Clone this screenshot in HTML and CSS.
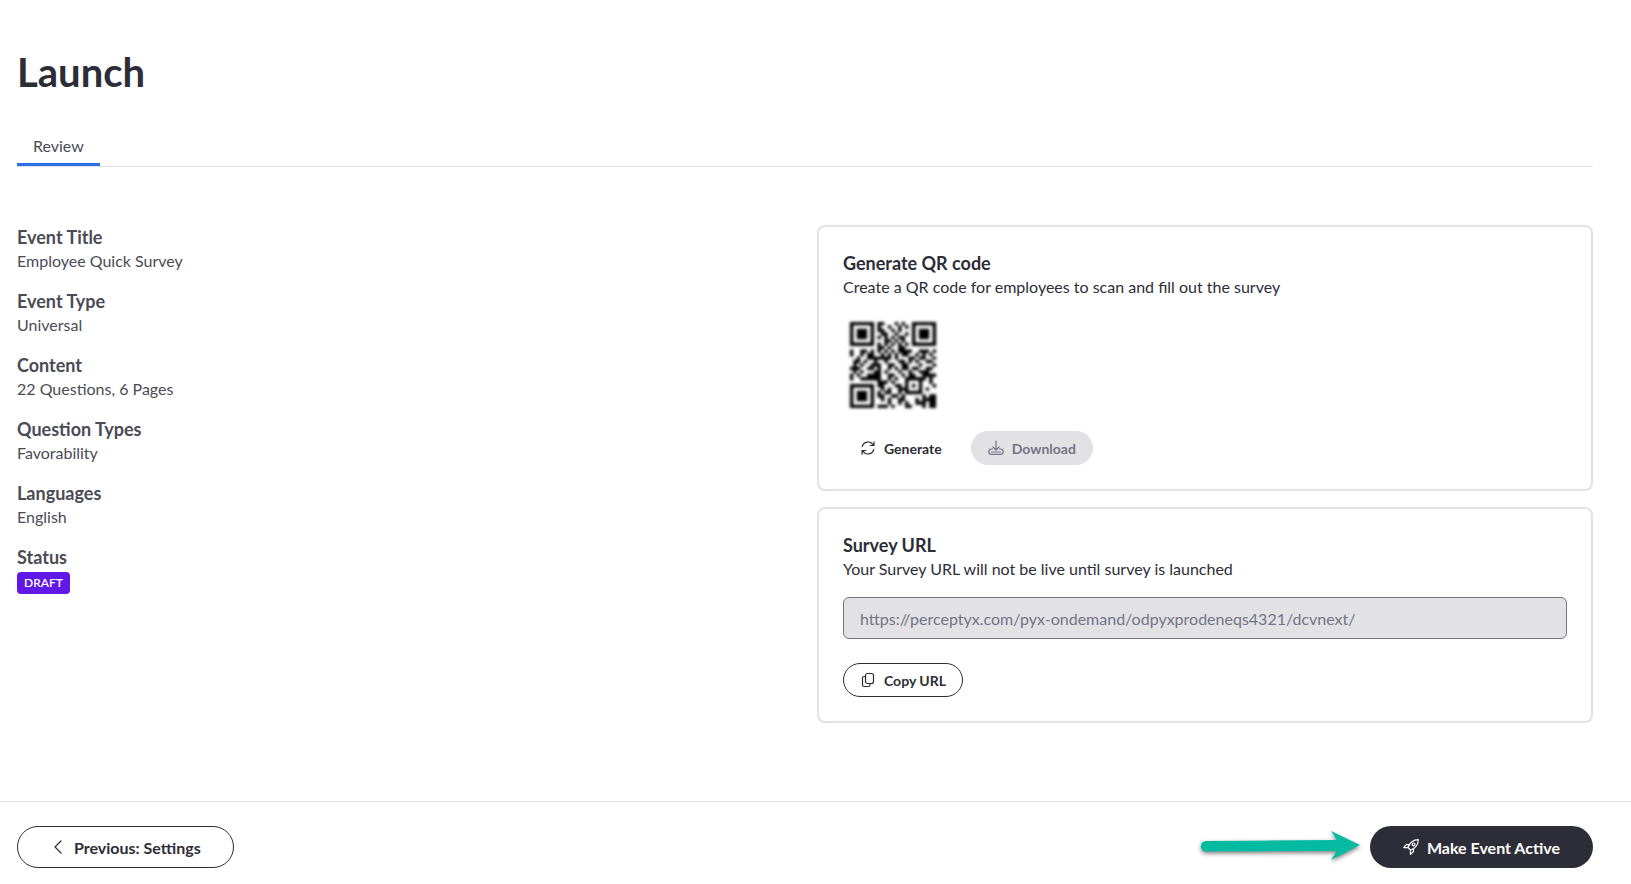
FILE: index.html
```
<!DOCTYPE html>
<html lang="en">
<head>
    <meta charset="UTF-8">
    <meta name="viewport" content="width=device-width, initial-scale=1.0">
    <title>Launch</title>
    <link rel="stylesheet" href="styles.css">
</head>
<body>

    <main>
        <h1>Launch</h1>

        <nav class="tabs">
            <a href="#review" class="tab active">Review</a>
        </nav>

        <div class="review" id="review">
            <dl class="details">
                <div>
                    <dt>Event Title</dt>
                    <dd>Employee Quick Survey</dd>
                </div>
                <div>
                    <dt>Event Type</dt>
                    <dd>Universal</dd>
                </div>
                <div>
                    <dt>Content</dt>
                    <dd>22 Questions, 6 Pages</dd>
                </div>
                <div>
                    <dt>Question Types</dt>
                    <dd>Favorability</dd>
                </div>
                <div>
                    <dt>Languages</dt>
                    <dd>English</dd>
                </div>
                <div>
                    <dt>Status</dt>
                    <dd><span class="badge">DRAFT</span></dd>
                </div>
            </dl>

            <div class="cards">
                <section class="card">
                    <h2>Generate QR code</h2>
                    <p>Create a QR code for employees to scan and fill out the survey</p>
                    <svg class="qr" viewBox="-2 -2 29 29" role="img" aria-label="QR code">
                        <path id="qrModules"></path>
                    </svg>
                    <div class="actions">
                        <button type="button" class="button text">
                            <svg width="16" height="16" viewBox="0 0 16 16">
                                <path d="M2.2 6.6A6 6 0 0 1 13.2 5M14 1.8V5.5H10.3M13.8 9.4A6 6 0 0 1 2.8 11M2 14.2V10.5H5.7"/>
                            </svg>
                            Generate
                        </button>
                        <button type="button" class="button" disabled>
                            <svg width="16" height="16" viewBox="0 0 16 16">
                                <path d="M8 1V9.8M4.8 6.8L8 10L11.2 6.8M4.6 9H3.5A2.7 2.7 0 0 0 3.5 14.4H12.5A2.7 2.7 0 0 0 12.5 9H11.4M3.6 12H12.4"/>
                            </svg>
                            Download
                        </button>
                    </div>
                </section>

                <section class="card">
                    <h2><label for="surveyUrl">Survey URL</label></h2>
                    <p>Your Survey URL will not be live until survey is launched</p>
                    <input type="text" id="surveyUrl" value="https://perceptyx.com/pyx-ondemand/odpyxprodeneqs4321/dcvnext/" disabled>
                    <button type="button" class="button outline">
                        <svg width="16" height="16" viewBox="0 0 16 16">
                            <rect x="5.5" y="1.5" width="8" height="10" rx="2"/>
                            <path d="M5.5 4.5H4A1.5 1.5 0 0 0 2.5 6V13A1.5 1.5 0 0 0 4 14.5H8.5A1.5 1.5 0 0 0 10 13V11.5"/>
                        </svg>
                        Copy URL
                    </button>
                </section>
            </div>
        </div>
    </main>

    <footer>
        <button type="button" class="button outline large">
            <svg width="16" height="16" viewBox="0 0 16 16">
                <path d="M11 2L5 8L11 14"/>
            </svg>
            Previous: Settings
        </button>
        <div class="next">
            <svg class="arrow" width="160" height="32" viewBox="0 0 160 32">
                <path d="M6 10L137 9L131 0L160 14L131 29L137 20L6 20.500A5 5 0 0 1 6 10Z"/>
            </svg>
            <button type="button" class="button dark large">
                <svg width="16" height="16" viewBox="0 0 16 16">
                    <path d="M5 8.500C6.800 3.500 10.500 .8 15.300 .7C15.300 5.500 12.500 9.200 7.500 11ZM6.300 5.400L3.300 5.600L.7 8.600L5 8.500M10.600 9.700L10.400 12.700L7.400 15.300L7.500 11"/>
                    <circle cx="10.600" cy="5.400" r="1.400"/>
                </svg>
                Make Event Active
            </button>
        </div>
    </footer>

    <script>
        // QR modules, one string per row
        const rows = [
            '#######.##...#.#..#######',
            '#.....#.#..#..#.#.#.....#',
            '#.###.#.##..#.#...#.###.#',
            '#.###.#..##..#..#.#.###.#',
            '#.###.#.#.#.#.##..#.###.#',
            '#.....#...##.#.#..#.....#',
            '#######.#.#.#.#.#.#######',
            '........##.#..##.........',
            '#..##.#.#.#.#.####..###.#',
            '#..#.##..#.#.#.##..#.#.#.',
            '..#..#######.#...##.##..#',
            '.##.#..#..#...##.#.#..##.',
            '.#.#..###..##..##...#...#',
            '###..##.#..#.#.##.##..##.',
            '.#.#...##.#...#..#..###..',
            '#.#..####..##..#.##..####',
            '#..######..#.#..######.#.',
            '........###.#...#...#..#.',
            '#######.##...##.#.#.#...#',
            '#.....#..#.#..###...#.#..',
            '#.###.#.#.##..#.#####....',
            '#.###.#.##..##.#.....#.##',
            '#.###.#..#.#..##...#.####',
            '#.....#....#..#.#..###.##',
            '#######.###.#...##...#.##'
        ];
        let d = '';
        rows.forEach(function(row, y) {
            for (let x = 0; x < row.length; x++) {
                if (row[x] === '#') d += 'M' + x + ' ' + y + 'h1v1h-1z';
            }
        });
        document.getElementById('qrModules').setAttribute('d', d);
    </script>
</body>
</html>
```
FILE: styles.css
```
* {
    box-sizing: border-box;
}
body {
    font-family: Lato, "Liberation Sans", sans-serif;
    font-size: 16px;
    line-height: 24px;
    color: #2d2d37;
    background-color: white;
    margin: 0;
    min-height: 100vh;
    display: flex;
    flex-direction: column;
}
main {
    flex: 1;
    padding: 48px 38px 48px 17px;
}
h1 {
    font-size: 40px;
    line-height: 48px;
    font-weight: 700;
    margin: 0 0 32px;
}
.tabs {
    display: flex;
    border-bottom: 1px solid #e2e2e4;
}
.tab {
    padding: 6px 16px 5px;
    border-bottom: 3px solid transparent;
    color: #4b4b55;
    text-decoration: none;
}
.tab.active {
    border-bottom-color: #2b70e4;
}
.review {
    display: grid;
    grid-template-columns: 1fr 1fr;
    gap: 24px;
    margin-top: 58px;
}
.details {
    display: flex;
    flex-direction: column;
    gap: 16px;
    margin: 0;
    color: #4b4b55;
}
dt {
    font-size: 18px;
    font-weight: 700;
}
dd {
    margin: 0;
}
.badge {
    display: inline-block;
    padding: 0 7px;
    border-radius: 4px;
    background-color: #6018e6;
    color: white;
    font-size: 12px;
    line-height: 22px;
    font-weight: 600;
}
.cards {
    display: flex;
    flex-direction: column;
    gap: 16px;
}
.card {
    display: flex;
    flex-direction: column;
    align-items: flex-start;
    padding: 24px;
    border: 2px solid #e2e2e4;
    border-radius: 8px;
}
.card h2 {
    font-size: 18px;
    line-height: 24px;
    font-weight: 700;
    margin: 0;
}
.card p {
    margin: 0 0 16px;
}
.qr {
    width: 100px;
    height: 100px;
    margin-bottom: 16px;
    filter: blur(1.4px);
}
.actions {
    display: flex;
    gap: 12px;
}
.card input {
    width: 100%;
    height: 42px;
    margin-bottom: 24px;
    padding: 0 16px;
    border: 1px solid #737386;
    border-radius: 6px;
    background-color: #e2e2e5;
    color: #737386;
    font: inherit;
}
.button {
    display: flex;
    align-items: center;
    gap: 8px;
    height: 34px;
    padding: 0 16px;
    border: 1px solid transparent;
    border-radius: 24px;
    background-color: transparent;
    color: #2d2d37;
    font-family: inherit;
    font-size: 14px;
    font-weight: 700;
}
.button svg {
    fill: none;
    stroke: currentColor;
    stroke-width: 1.2;
    stroke-linecap: round;
    stroke-linejoin: round;
}
.button:disabled {
    background-color: #e2e2e5;
    color: #737386;
}
.button.outline {
    border-color: #2d2d37;
}
.button.dark {
    background-color: #2d2d37;
    color: white;
}
.button.large {
    height: 42px;
    padding: 0 32px;
    font-size: 16px;
}
footer {
    display: flex;
    justify-content: space-between;
    align-items: center;
    padding: 24px 38px 16px 17px;
    border-top: 1px solid #e2e2e4;
}
.next {
    display: flex;
    align-items: center;
    gap: 10px;
}
.arrow {
    overflow: visible;
    fill: #04bba2;
    filter: drop-shadow(0 2px 2px rgba(0, 0, 0, 0.5));
}
```
